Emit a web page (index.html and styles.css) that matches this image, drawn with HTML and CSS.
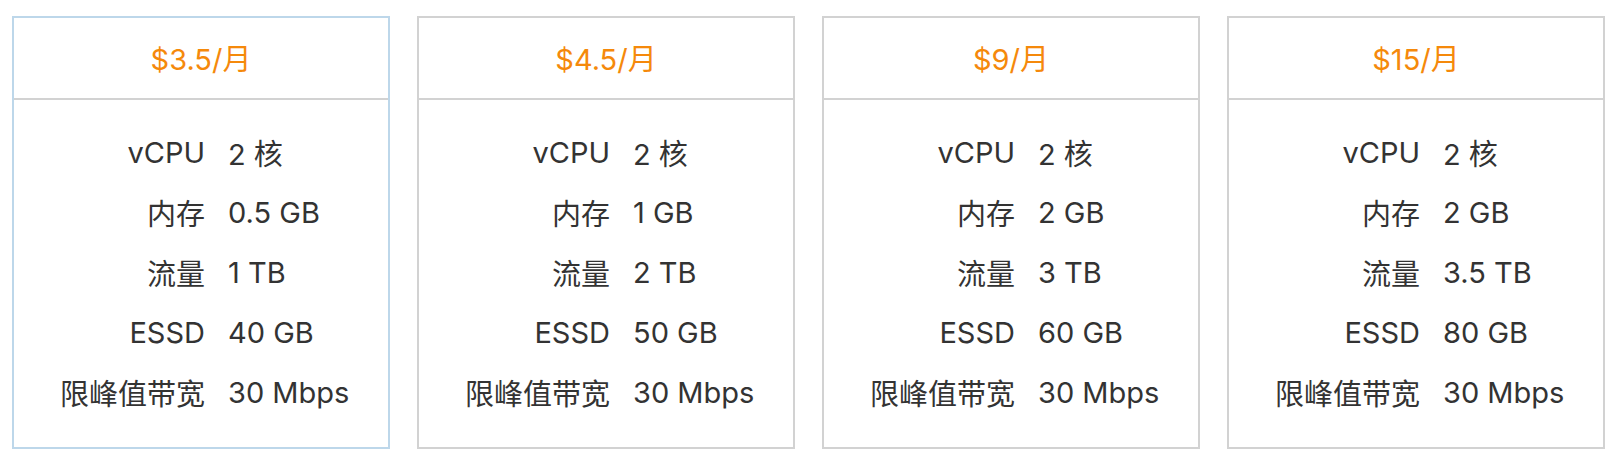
FILE: index.html
```html
<!DOCTYPE html>
<html lang="zh-CN">
<head>
<meta charset="utf-8">
<title>套餐</title>
<link rel="stylesheet" href="styles.css">
</head>
<body>
<div class="plans">
  <div class="card card-active">
    <div class="price">$3.5/月</div>
    <div class="specs">
      <div class="label">vCPU</div><div class="value">2 核</div>
      <div class="label">内存</div><div class="value">0.5 GB</div>
      <div class="label">流量</div><div class="value">1 TB</div>
      <div class="label">ESSD</div><div class="value">40 GB</div>
      <div class="label">限峰值带宽</div><div class="value">30 Mbps</div>
    </div>
  </div>
  <div class="card">
    <div class="price">$4.5/月</div>
    <div class="specs">
      <div class="label">vCPU</div><div class="value">2 核</div>
      <div class="label">内存</div><div class="value">1 GB</div>
      <div class="label">流量</div><div class="value">2 TB</div>
      <div class="label">ESSD</div><div class="value">50 GB</div>
      <div class="label">限峰值带宽</div><div class="value">30 Mbps</div>
    </div>
  </div>
  <div class="card">
    <div class="price">$9/月</div>
    <div class="specs">
      <div class="label">vCPU</div><div class="value">2 核</div>
      <div class="label">内存</div><div class="value">2 GB</div>
      <div class="label">流量</div><div class="value">3 TB</div>
      <div class="label">ESSD</div><div class="value">60 GB</div>
      <div class="label">限峰值带宽</div><div class="value">30 Mbps</div>
    </div>
  </div>
  <div class="card">
    <div class="price">$15/月</div>
    <div class="specs">
      <div class="label">vCPU</div><div class="value">2 核</div>
      <div class="label">内存</div><div class="value">2 GB</div>
      <div class="label">流量</div><div class="value">3.5 TB</div>
      <div class="label">ESSD</div><div class="value">80 GB</div>
      <div class="label">限峰值带宽</div><div class="value">30 Mbps</div>
    </div>
  </div>
</div>
</body>
</html>
```

FILE: styles.css
```css
html, body {
  margin: 0;
  padding: 0;
  background: #ffffff;
}

body {
  font-family: Inter, "Noto Sans CJK SC", sans-serif;
  color: #333333;
}

.plans {
  display: grid;
  grid-template-columns: repeat(4, 1fr);
  column-gap: 27px;
  padding: 16px 15px 13px 12px;
}

.card {
  border: 2px solid #d2d2d2;
  background: #ffffff;
}

.card-active {
  border-color: #bdd7ea;
}

.price {
  height: 78px;
  padding-bottom: 2px;
  display: flex;
  align-items: center;
  justify-content: center;
  border-bottom: 2px solid #d2d2d2;
  color: #f5890b;
  font-size: 29px;
}

.specs {
  display: grid;
  grid-template-columns: 1fr 1fr;
  grid-auto-rows: 60px;
  padding: 22px 0 25px 8px;
  font-size: 29px;
}

.label,
.value {
  display: flex;
  align-items: center;
}

.label {
  justify-content: flex-end;
}

.value {
  padding-left: 23px;
}
```
